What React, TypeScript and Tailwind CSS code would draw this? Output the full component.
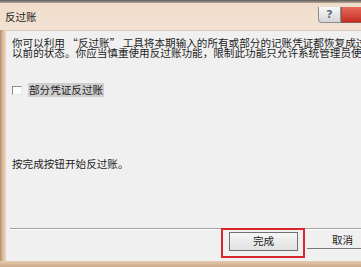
import React from "react";

const font = { fontFamily: '"Noto Sans CJK SC", "Noto Sans", sans-serif' };

export default function App() {
  return (
    <div
      className="w-[361px] h-[267px] overflow-hidden flex flex-col bg-[#e9d3bb] text-[#1c1c1c]"
      style={font}
    >
      {/* top frame line */}
      <div className="h-[3px] bg-gradient-to-b from-[#5a5a5a] to-[#b9a898] shrink-0" />
      {/* title bar */}
      <div className="h-[27px] shrink-0 flex items-start bg-gradient-to-b from-[#f0dccb] to-[#f3e3d4]">
        <div className="pl-[5px] pt-[7px] text-[10.5px] leading-[14px] text-[#222]">反过账</div>
        <div className="ml-auto flex items-start pt-[4px]">
          <div className="w-[23px] h-[16px] rounded-bl-[4px] border border-[#8c8c8c] border-t-0 bg-gradient-to-b from-[#f8f8f8] to-[#d6d6d6] flex items-center justify-center">
            <span className="text-[11px] leading-none font-bold text-[#5b6a86]" style={{ fontFamily: '"DejaVu Sans", sans-serif' }}>?</span>
          </div>
          <div className="w-[20px] h-[16px] border border-[#8c5a50] border-t-0 border-r-0 bg-gradient-to-b from-[#e86a5a] to-[#c42b1f]" />
        </div>
      </div>
      {/* body */}
      <div className="flex-1 flex min-h-0">
        <div className="w-[6px] shrink-0 bg-gradient-to-r from-[#b38d6c] via-[#dcc0a2] to-[#ecd6be]" />
        <div className="flex-1 min-w-0 bg-[#f0f0f0] border-t border-[#d9c9b8] flex flex-col overflow-hidden">
          <div className="pl-[6px] pt-[7px] text-[10.6px] leading-[10px] whitespace-nowrap">
            <div>你可以利用 “反过账” 工具将本期输入的所有或部分的记账凭证都恢复成过账</div>
            <div>以前的状态。你应当慎重使用反过账功能，限制此功能只允许系统管理员使用</div>
          </div>
          <div className="mt-[25px] pl-[6px] flex items-center h-[14px]">
            <div className="w-[10px] h-[9px] border border-[#8a8a8a] border-r-[#e8e8e8] border-b-[#e8e8e8] bg-white" />
            <div className="ml-[6px] px-[1px] bg-[#cfcfcf] text-[10.6px] leading-[14px]">部分凭证反过账</div>
          </div>
          <div className="mt-[61px] pl-[6px] text-[10.6px] leading-[12px]">按完成按钮开始反过账。</div>
          <div className="mt-[58px] ml-[4px] h-[1px] bg-[#a3a3a3] shrink-0" />
          <div className="h-[1px] ml-[4px] bg-white shrink-0" />
          <div className="mt-[2px] flex items-start shrink-0">
            <div className="ml-[223px] relative">
              <div className="w-[69px] h-[19px] border border-[#707070] bg-gradient-to-b from-[#f6f6f6] to-[#e1e1e1] flex items-center justify-center text-[10.6px] leading-none">
                完成
              </div>
              <div className="absolute left-[-8px] top-[-4px] w-[84px] h-[30px] border-2 border-[#d8282c]" />
            </div>
            <div className="ml-[9px] w-[69px] h-[17px] shrink-0 border-b border-[#7a7a7a] flex items-center justify-center text-[10.6px] leading-none">
              <span className="pl-[2px]">取消</span>
            </div>
          </div>
        </div>
      </div>
      {/* bottom frame */}
      <div className="h-[6px] shrink-0 bg-gradient-to-b from-[#e4cbaf] to-[#caa987]" />
    </div>
  );
}
